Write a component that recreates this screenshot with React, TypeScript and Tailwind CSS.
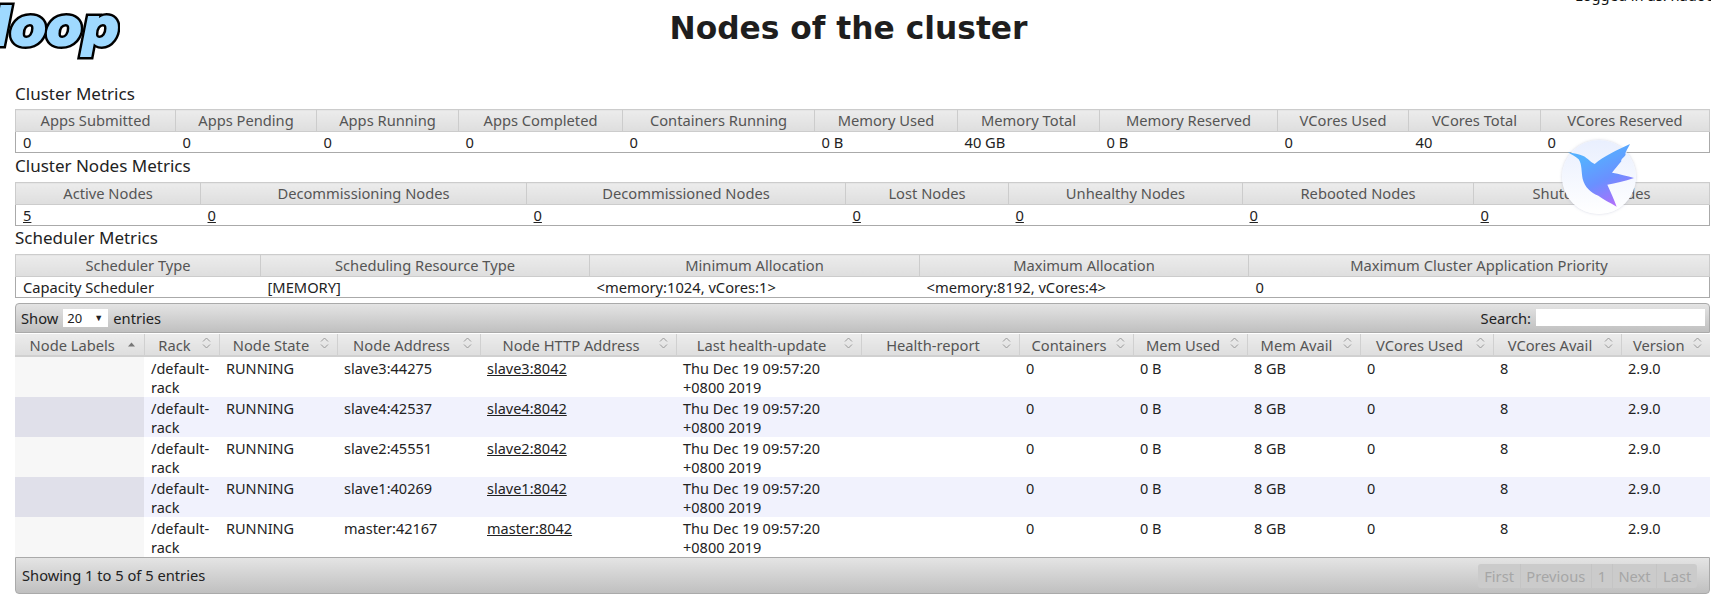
const FONT = "font-['Noto_Sans','Liberation_Sans',sans-serif]";

type Metric = { label: string; value: string; width: string; link?: boolean };

const clusterMetrics: Metric[] = [
  { label: "Apps Submitted", value: "0", width: "w-[160px]" },
  { label: "Apps Pending", value: "0", width: "w-[141px]" },
  { label: "Apps Running", value: "0", width: "w-[142px]" },
  { label: "Apps Completed", value: "0", width: "w-[164px]" },
  { label: "Containers Running", value: "0", width: "w-[192px]" },
  { label: "Memory Used", value: "0 B", width: "w-[143px]" },
  { label: "Memory Total", value: "40 GB", width: "w-[142px]" },
  { label: "Memory Reserved", value: "0 B", width: "w-[178px]" },
  { label: "VCores Used", value: "0", width: "w-[131px]" },
  { label: "VCores Total", value: "40", width: "w-[132px]" },
  { label: "VCores Reserved", value: "0", width: "w-[169px]" },
];

const nodeMetrics: Metric[] = [
  { label: "Active Nodes", value: "5", width: "w-[185px]", link: true },
  { label: "Decommissioning Nodes", value: "0", width: "w-[326px]", link: true },
  { label: "Decommissioned Nodes", value: "0", width: "w-[319px]", link: true },
  { label: "Lost Nodes", value: "0", width: "w-[163px]", link: true },
  { label: "Unhealthy Nodes", value: "0", width: "w-[234px]", link: true },
  { label: "Rebooted Nodes", value: "0", width: "w-[231px]", link: true },
  { label: "Shutdown Nodes", value: "0", width: "w-[236px]", link: true },
];

const schedulerMetrics: Metric[] = [
  { label: "Scheduler Type", value: "Capacity Scheduler", width: "w-[245px]" },
  { label: "Scheduling Resource Type", value: "[MEMORY]", width: "w-[329px]" },
  { label: "Minimum Allocation", value: "<memory:1024, vCores:1>", width: "w-[330px]" },
  { label: "Maximum Allocation", value: "<memory:8192, vCores:4>", width: "w-[329px]" },
  { label: "Maximum Cluster Application Priority", value: "0", width: "w-[461px]" },
];

const nodeColumns = [
  { label: "Node Labels", width: "w-[129px]", asc: true },
  { label: "Rack", width: "w-[75px]" },
  { label: "Node State", width: "w-[118px]" },
  { label: "Node Address", width: "w-[143px]" },
  { label: "Node HTTP Address", width: "w-[196px]" },
  { label: "Last health-update", width: "w-[185px]" },
  { label: "Health-report", width: "w-[158px]" },
  { label: "Containers", width: "w-[114px]" },
  { label: "Mem Used", width: "w-[114px]" },
  { label: "Mem Avail", width: "w-[113px]" },
  { label: "VCores Used", width: "w-[133px]" },
  { label: "VCores Avail", width: "w-[128px]" },
  { label: "Version", width: "w-[89px]" },
];

const nodes = [
  { address: "slave3:44275", http: "slave3:8042" },
  { address: "slave4:42537", http: "slave4:8042" },
  { address: "slave2:45551", http: "slave2:8042" },
  { address: "slave1:40269", http: "slave1:8042" },
  { address: "master:42167", http: "master:8042" },
];

function MetricsTable({ metrics }: { metrics: Metric[] }) {
  return (
    <table className="w-[1694px] table-fixed border-collapse">
      <thead>
        <tr>
          {metrics.map((m) => (
            <th
              key={m.label}
              className={`${m.width} h-[22px] border border-[#cccccc] bg-gradient-to-b from-[#ececec] to-[#dedede] p-0 text-center text-[14.7px] leading-[19px] font-normal text-[#555555]`}
            >
              {m.label}
            </th>
          ))}
        </tr>
      </thead>
      <tbody>
        <tr className="border border-[#aaaaaa]">
          {metrics.map((m) => (
            <td key={m.label} className="h-[21px] px-[7px] py-0 text-[14.7px] leading-[19px] text-[#222222]">
              {m.link ? <a className="underline">{m.value}</a> : m.value}
            </td>
          ))}
        </tr>
      </tbody>
    </table>
  );
}

function SortIcon({ asc }: { asc?: boolean }) {
  if (asc) {
    return (
      <svg width="9" height="9" viewBox="0 0 9 9" className="absolute top-[6px] right-[8px]">
        <path d="M1 6.5 L4.5 2.5 L8 6.5 Z" fill="#777777" />
      </svg>
    );
  }
  return (
    <svg width="9" height="12" viewBox="0 0 9 12" fill="none" stroke="#999999" className="absolute top-[3px] right-[8px]">
      <path d="M1 4.5 L4.5 1 L8 4.5" />
      <path d="M1 7.5 L4.5 11 L8 7.5" />
    </svg>
  );
}

function Hummingbird() {
  return (
    <div className="absolute top-[140px] left-[1562px] h-[74px] w-[74px] rounded-full bg-gradient-to-b from-[#e9effe] to-[#ffffff] shadow-[0_0_3px_rgba(120,130,170,0.35)]">
      <svg viewBox="96 48 222 222" className="h-full w-full">
        <defs>
          <linearGradient id="bird" x1="0.3" y1="0.2" x2="0.7" y2="1">
            <stop offset="0" stopColor="#55b0ff" />
            <stop offset="0.5" stopColor="#6a90ff" />
            <stop offset="0.85" stopColor="#9a78fc" />
            <stop offset="1" stopColor="#b86ffa" />
          </linearGradient>
        </defs>
        <path
          d="M114 85 C130 88 148 90 160 96 C172 102 184 116 194 120 C222 96 262 78 300 60 C292 76 284 88 287 92 C280 102 272 106 274 112 C264 124 254 136 246 146 C268 150 292 156 312 162 C284 172 256 178 232 182 C242 204 252 226 260 248 C240 236 220 226 205 215 C182 206 165 190 158 165 C154 145 156 120 146 106 C136 98 125 92 114 85 Z"
          fill="url(#bird)"
        />
      </svg>
    </div>
  );
}

export default function App() {
  return (
    <div className={`relative h-[612px] w-[1711px] overflow-hidden bg-white text-[14.7px] text-[#222222] ${FONT}`}>
      {/* Header */}
      <header className="flex h-[79px]">
        <div className="w-[120px] shrink-0">
          <svg width="120" height="66" viewBox="0 0 120 66" className="overflow-hidden">
            <text
              x="-27"
              y="45"
              fontFamily="DejaVu Sans, sans-serif"
              fontWeight="700"
              fontStyle="italic"
              fontSize="52"
              fill="#000000"
              stroke="#000000"
              strokeWidth="7"
              strokeLinejoin="miter"
            >
              doop
            </text>
            <text
              x="-27"
              y="45"
              fontFamily="DejaVu Sans, sans-serif"
              fontWeight="700"
              fontStyle="italic"
              fontSize="52"
              fill="#9fd9ff"
              stroke="#9fd9ff"
              strokeWidth="2"
              strokeLinejoin="miter"
              aria-hidden="true"
            >
              doop
            </text>
          </svg>
        </div>
        <h1 className="flex-1 pt-[5px] pl-[2px] text-center font-['DejaVu_Sans',sans-serif] text-[31.3px] leading-[46px] font-bold text-[#1e1e1e]">
          Nodes of the cluster
        </h1>
        <div className="mt-[-13px] w-[136px] shrink-0 text-[14.7px] leading-[16px] whitespace-nowrap text-[#111111]">Logged in as: hadoop</div>
      </header>

      <main className="pl-[15px]">
        <h3 className="h-[30px] text-[17px] leading-[30px] font-normal text-[#222222]">Cluster Metrics</h3>
        <MetricsTable metrics={clusterMetrics} />
        <h3 className="mt-[1px] h-[28px] text-[17px] leading-[24px] font-normal text-[#222222]">Cluster Nodes Metrics</h3>
        <MetricsTable metrics={nodeMetrics} />
        <h3 className="h-[28px] text-[17px] leading-[24px] font-normal text-[#222222]">Scheduler Metrics</h3>
        <MetricsTable metrics={schedulerMetrics} />

        {/* Nodes table */}
        <div className="mt-[5px] w-[1695px]">
          <div className="flex h-[30px] items-center justify-between rounded-t-[4px] border border-[#aaaaaa] bg-gradient-to-b from-[#e4e4e4] to-[#c0c0c0] pr-[4px] pl-[5px]">
            <div className="flex items-center">
              Show
              <span className="mx-[5px] flex h-[18px] w-[45px] items-center justify-between bg-white pr-[5px] pl-[4px] text-[13px] leading-[18px]">
                20
                <span className="text-[9px] leading-none">▼</span>
              </span>
              entries
            </div>
            <label className="flex items-center gap-[5px]">
              Search:
              <input className="h-[17px] w-[169px] bg-white outline-none" aria-label="Search" />
            </label>
          </div>
          <table className="mt-[1px] w-[1695px] table-fixed border-collapse">
            <thead>
              <tr>
                {nodeColumns.map((c) => (
                  <th
                    key={c.label}
                    className={`${c.width} relative h-[22px] border-r border-b-2 border-[#d0d0d0] bg-gradient-to-b from-[#ececec] to-[#dedede] p-0 pt-[1px] pr-[14px] text-center text-[14.7px] leading-[19px] font-normal text-[#555555] last:border-r-0`}
                  >
                    {c.label}
                    <SortIcon asc={c.asc} />
                  </th>
                ))}
              </tr>
            </thead>
            <tbody>
              {nodes.map((n, i) => {
                const even = i % 2 === 1;
                return (
                  <tr key={n.address} className={`h-[40px] ${even ? "bg-[#f1f2fd]" : "bg-white"}`}>
                    <td className={even ? "bg-[#e0e0ea]" : "bg-[#f7f7f7]"} />
                    {[
                      "/default-rack",
                      "RUNNING",
                      n.address,
                      <a key="http" className="underline">
                        {n.http}
                      </a>,
                      "Thu Dec 19 09:57:20 +0800 2019",
                      "",
                      "0",
                      "0 B",
                      "8 GB",
                      "0",
                      "8",
                      "2.9.0",
                    ].map((v, j) => (
                      <td key={j} className="px-[7px] pt-[2px] pb-0 align-top text-[14.5px] leading-[19px] break-words">
                        {v}
                      </td>
                    ))}
                  </tr>
                );
              })}
            </tbody>
          </table>
          <div className="flex h-[37px] items-center justify-between rounded-b-[4px] border border-[#aaaaaa] bg-gradient-to-b from-[#e4e4e4] to-[#c0c0c0] pr-[12px] pl-[6px]">
            <span>Showing 1 to 5 of 5 entries</span>
            <div className="flex h-[24px] items-center rounded-[3px] bg-[#cbcbcb] text-[14.7px] leading-[24px] text-[#a6a6a6]">
              <span className="px-[5.7px]">First</span>
              <span className="border-l border-[#c4c4c4] px-[5.7px]">Previous</span>
              <span className="border-l border-[#c4c4c4] px-[5.7px]">1</span>
              <span className="border-l border-[#c4c4c4] px-[5.7px]">Next</span>
              <span className="border-l border-[#c4c4c4] px-[5.7px]">Last</span>
            </div>
          </div>
        </div>
      </main>

      <Hummingbird />
    </div>
  );
}
